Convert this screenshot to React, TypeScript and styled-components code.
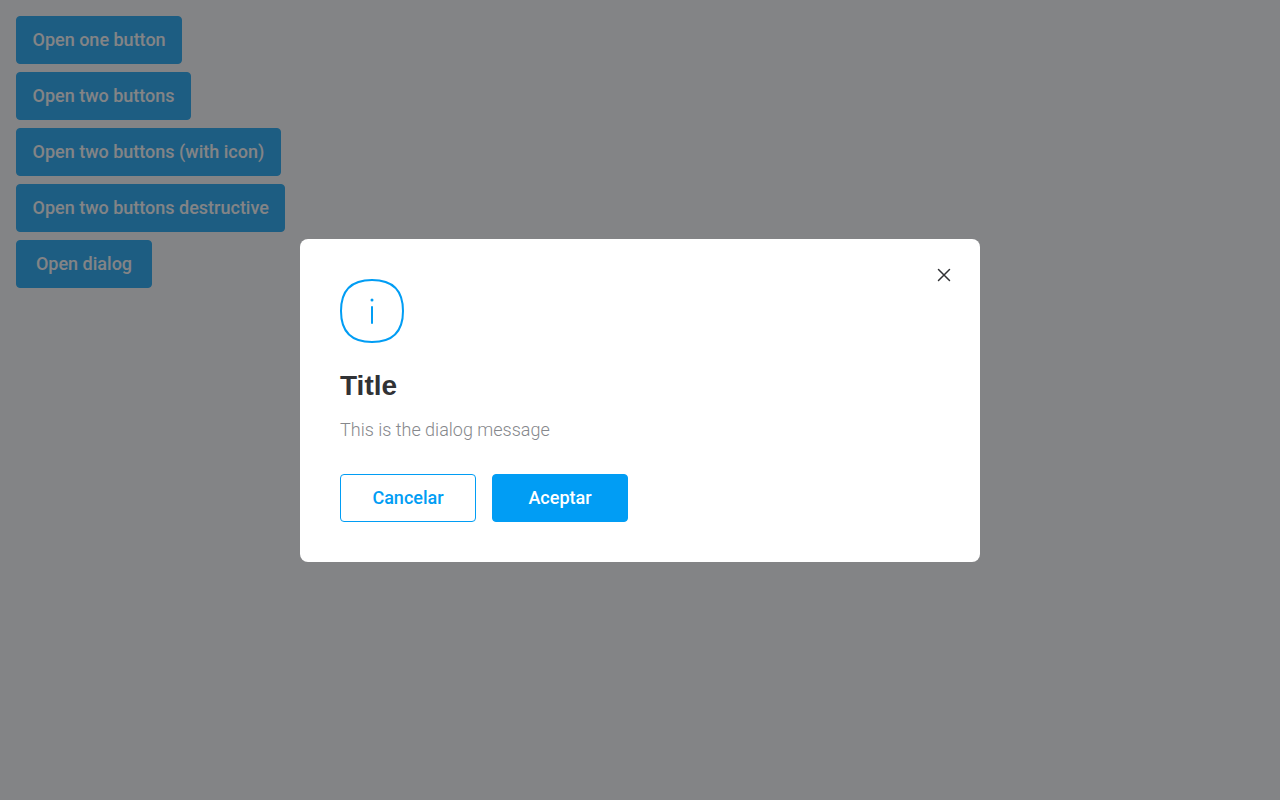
import React from 'react';
import styled, { createGlobalStyle, css } from 'styled-components';

const GlobalStyle = createGlobalStyle`
  *, *::before, *::after { box-sizing: border-box; }
  body { margin: 0; background: #fff; font-family: Roboto, "Liberation Sans", sans-serif; }
`;

const Page = styled.main`
  min-height: 100vh;
  padding: 16px;
  display: flex;
  flex-direction: column;
  align-items: flex-start;
  gap: 8px;
`;

const Button = styled.button<{ $secondary?: boolean }>`
  height: 48px;
  min-width: 136px;
  padding: 0 15.5px;
  border: 1px solid #019df4;
  border-radius: 4px;
  background: #019df4;
  color: #fff;
  font: 500 18px/24px Roboto, "Liberation Sans", sans-serif;
  white-space: nowrap;
  ${(p) => p.$secondary && css`
    background: transparent;
    color: #019df4;
  `}
`;

const Overlay = styled.div`
  position: fixed;
  inset: 0;
  display: flex;
  align-items: center;
  justify-content: center;
  background: rgba(49, 50, 53, 0.6);
`;

const Dialog = styled.section`
  position: relative;
  width: 680px;
  padding: 40px;
  border-radius: 8px;
  background: #fff;
`;

const CloseButton = styled.button`
  position: absolute;
  top: 24px;
  right: 24px;
  width: 24px;
  height: 24px;
  padding: 0;
  border: 0;
  background: none;
  svg { display: block; }
`;

const IconHolder = styled.div`
  height: 64px;
  margin-bottom: 25px;
  svg { display: block; }
`;

const Title = styled.h1`
  margin: 0 0 14px;
  color: #313235;
  font: 700 28px/36px "Liberation Sans", sans-serif;
`;

const Message = styled.p`
  margin: 0 0 32px;
  color: #86888c;
  font-size: 18px;
  font-weight: 300;
  line-height: 24px;
`;

const Actions = styled.div`
  display: flex;
  gap: 16px;
`;

const labels = [
  'Open one button',
  'Open two buttons',
  'Open two buttons (with icon)',
  'Open two buttons destructive',
  'Open dialog',
];

export default function App() {
  return (
    <>
      <GlobalStyle />
      <Page>
        {labels.map((label) => <Button key={label}>{label}</Button>)}
      </Page>
      <Overlay>
        <Dialog role="dialog" aria-modal="true" aria-labelledby="dialog-title">
          <CloseButton aria-label="Cerrar">
            <svg width="24" height="24" viewBox="0 0 24 24" fill="none" stroke="#313235" strokeWidth="1.5" strokeLinecap="round">
              <path d="M6.5 6.5l11 11M17.5 6.5l-11 11" />
            </svg>
          </CloseButton>
          <IconHolder>
            <svg width="64" height="64" viewBox="0 0 64 64" fill="none" stroke="#019df4" strokeWidth="2">
              <path d="M32 1C11 1 1 11 1 32s10 31 31 31 31-10 31-31S53 1 32 1z" />
              <path d="M32 28v16" strokeLinecap="round" />
              <circle cx="32" cy="21" r="1.5" fill="#019df4" stroke="none" />
            </svg>
          </IconHolder>
          <Title id="dialog-title">Title</Title>
          <Message>This is the dialog message</Message>
          <Actions>
            <Button $secondary>Cancelar</Button>
            <Button>Aceptar</Button>
          </Actions>
        </Dialog>
      </Overlay>
    </>
  );
}
